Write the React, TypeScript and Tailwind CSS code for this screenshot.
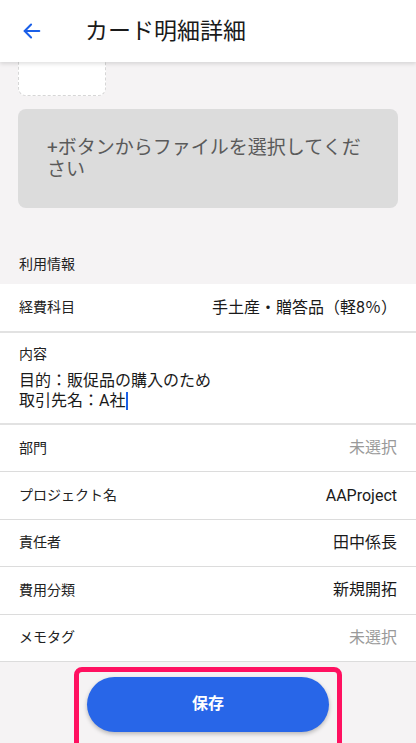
import React from 'react';

const font = { fontFamily: 'Roboto, "Noto Sans CJK JP", "Noto Sans", sans-serif' };

interface RowProps {
  label: string;
  value: string;
  muted?: boolean;
}

function Row({ label, value, muted }: RowProps) {
  return (
    <div className="flex items-center justify-between h-[47.4px] shrink-0 px-[19px] bg-white border-b border-[#dcdcdc]">
      <span className="text-[14px] text-[#222]">{label}</span>
      <span className={`text-[16px] ${muted ? 'text-[#9a9a9a]' : 'text-[#1a1a1a]'}`}>{value}</span>
    </div>
  );
}

export default function App() {
  return (
    <div className="w-[416px] h-[743px] bg-[#f5f3f4] flex flex-col overflow-hidden" style={font}>
      {/* Header */}
      <header className="h-[62px] bg-white flex items-center shrink-0 shadow-[0_2px_4px_rgba(0,0,0,0.12)] relative z-10">
        <button className="ml-[21px] w-[22px] h-[22px] flex items-center justify-center text-[#1a5fe8]">
          <svg width="22" height="22" viewBox="0 0 24 24" fill="none" stroke="currentColor" strokeWidth="2.2" strokeLinecap="round" strokeLinejoin="round">
            <path d="M20 12H4" />
            <path d="M11 5l-7 7 7 7" />
          </svg>
        </button>
        <h1 className="ml-[42px] text-[23px] text-[#1a1a1a] leading-none">カード明細詳細</h1>
      </header>

      {/* Attachments */}
      <div className="h-[34px] overflow-hidden flex items-end px-[18px] shrink-0">
        <div className="w-[88px] h-[88px] bg-white rounded-[8px] border border-dashed border-[#d6d6d6]" />
      </div>
      <div className="mx-[18px] mt-[13px] h-[99px] bg-[#dcdcdc] rounded-[8px] pl-[29px] pr-[28px] pt-[28px] shrink-0">
        <p className="text-[19px] leading-[22px] text-[#5a5a5a]">+ボタンからファイルを選択してください</p>
      </div>

      {/* Usage info */}
      <div className="mt-[37px] h-[39px] flex items-center px-[19px] shrink-0">
        <span className="text-[14px] text-[#222]">利用情報</span>
      </div>
      <div className="flex items-center justify-between h-[49px] px-[19px] bg-white border-b-2 border-[#e2e2e2] shrink-0">
        <span className="text-[14px] text-[#222]">経費科目</span>
        <span className="text-[16px] text-[#1a1a1a]">手土産・贈答品（軽8％）</span>
      </div>
      <div className="h-[92px] bg-white border-b-2 border-[#e2e2e2] px-[19px] pt-[11px] shrink-0">
        <div className="text-[14px] text-[#222] leading-[20px]">内容</div>
        <div className="mt-[7px] text-[16px] text-[#1a1a1a] leading-[20px]">
          <div>目的：販促品の購入のため</div>
          <div className="flex items-center">
            取引先名：A社<span className="inline-block w-[2px] h-[18px] bg-[#1a5fe8] ml-[1px]" />
          </div>
        </div>
      </div>
      <Row label="部門" value="未選択" muted />
      <Row label="プロジェクト名" value="AAProject" />
      <Row label="責任者" value="田中係長" />
      <Row label="費用分類" value="新規開拓" />
      <Row label="メモタグ" value="未選択" muted />

      {/* Footer */}
      <div className="flex-1 flex justify-center pt-[5px]">
        <div className="w-[268px] h-[90px] shrink-0 border-[5px] border-[#ff1060] rounded-[8px] flex justify-center pt-[5px]">
          <button className="w-[242px] h-[55px] rounded-full bg-[#2866e8] text-white text-[16px] font-bold shadow-[0_2px_4px_rgba(0,0,0,0.25)]">
            保存
          </button>
        </div>
      </div>
    </div>
  );
}
